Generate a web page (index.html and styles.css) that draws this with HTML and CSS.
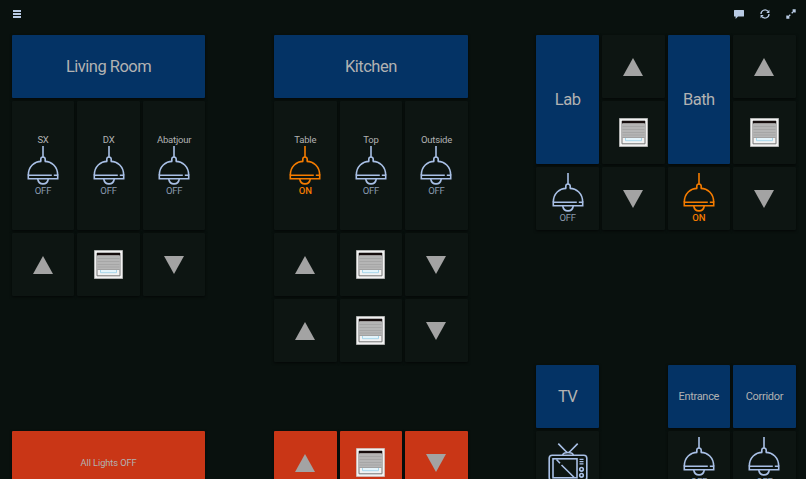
FILE: index.html
```html
<!DOCTYPE html>
<html lang="en">
<head>
<meta charset="utf-8">
<title>Home dashboard</title>
<link rel="stylesheet" href="styles.css">
</head>
<body>
<svg class="defs" aria-hidden="true">
  <symbol id="lamp" viewBox="0 0 32 39">
    <g fill="none" stroke="currentColor" stroke-width="1.6">
      <path d="M16 0V11.5"/>
      <path d="M13.800 15.500V13.200a2.200 2.200 0 0 1 4.400 0v2.300"/>
      <path d="M1.300 29.200C1.300 20.500 7.500 15.400 14.300 15.400M17.700 15.400C24.500 15.400 30.700 20.500 30.700 29.200"/>
      <path d="M1.300 28.500V32.700H30.700V28.500M1.300 29.300H24.800M26.800 29.300H30.700"/>
      <path d="M10.700 33C11.300 36.300 13.500 37.900 16 37.900S20.700 36.300 21.300 33"/>
    </g>
  </symbol>
  <symbol id="blind" viewBox="0 0 29 29">
    <path fill="#f1f1f1" stroke="#b5b5b5" stroke-width=".5" d="M.3 .3H28.700V28.700H.3Z"/>
    <path fill="#f2f2f2" stroke="#777" d="M3 3H26V25.800H3Z"/>
    <path fill="#150c0c" d="M3 3H26V5.500H3Z"/>
    <path fill="#b5b5b5" d="M3.500 5.500H25.500V19.500H3.500Z"/>
    <path stroke="#9c9c9c" stroke-width=".6" d="M3.500 8.500H25.500M3.500 11.500H25.500M3.500 14.500H25.500M3.500 17H25.500"/>
    <path stroke="#8b8b8b" stroke-width=".7" d="M3.500 19.500H25.500"/>
    <path fill="#e4f4fb" stroke="#a5d5ea" d="M6.500 20V22.700H22.500V20"/>
  </symbol>
  <symbol id="up" viewBox="0 0 20 18"><path fill="#a3a3a3" d="M10 0L20 18H0Z"/></symbol>
  <symbol id="down" viewBox="0 0 20 18"><path fill="#a3a3a3" d="M0 0H20L10 18Z"/></symbol>
  <symbol id="tv" viewBox="0 0 40 39">
    <g fill="none" stroke="currentColor" stroke-width="1.600">
      <path d="M10.300 .6L19 9.500M29.700 .6L21 9.500M14.700 12C15.300 9.800 17 9.500 20 9.500S24.700 9.800 25.300 12"/>
      <rect x="1.200" y="12.300" width="37.600" height="25" rx="3"/>
      <rect x="5" y="15.800" width="24" height="19"/>
      <path d="M8.500 16.500L12 20.200M13.500 22L26 34.200"/>
      <path d="M31.500 16.300H35.500M31.500 18.600H35.500M31.500 20.900H35.500" stroke-width="1.200"/>
      <circle cx="33.500" cy="26.300" r="1.800"/><circle cx="33.500" cy="32.300" r="1.800"/>
    </g>
  </symbol>
</svg>

<header class="topbar">
  <svg class="menu" viewBox="0 0 8 8"><path fill="currentColor" d="M0 0H8V1.900H0ZM0 3.050H8V4.950H0ZM0 6.100H8V8H0Z"/></svg>
  <div class="tools">
    <svg class="chat" viewBox="0 0 10 9"><path fill="currentColor" d="M.6 0H9.400Q10 0 10 .6V6Q10 6.600 9.400 6.600H4L1.600 9V6.600H.6Q0 6.600 0 6V.6Q0 0 .6 0Z"/></svg>
    <svg class="sync" viewBox="0 0 10 10"><path fill="none" stroke="currentColor" stroke-width="1.300" d="M1 5A4 4 0 0 1 7.900 2.200M9 5A4 4 0 0 1 2.100 7.800"/><path fill="currentColor" d="M9.400 .8V3.900H6.300ZM.6 9.200V6.100H3.700Z"/></svg>
    <svg class="expand" viewBox="0 0 10 10"><path stroke="currentColor" stroke-width="1.300" d="M1.500 8.500L4.300 5.700M5.700 4.300L8.500 1.500"/><path fill="currentColor" d="M6.600 .3H9.700V3.400H8.300L6.600 1.700ZM.3 6.600V9.700H3.400V8.300L1.700 6.600Z"/></svg>
  </div>
</header>

<main class="board">
  <div class="tile title c1 r1 wide">Living Room</div>
  <div class="tile light c1 r2 tall"><span class="name">SX</span><svg><use href="#lamp"/></svg><span class="state">OFF</span></div>
  <div class="tile light c2 r2 tall"><span class="name">DX</span><svg><use href="#lamp"/></svg><span class="state">OFF</span></div>
  <div class="tile light c3 r2 tall"><span class="name">Abatjour</span><svg><use href="#lamp"/></svg><span class="state">OFF</span></div>
  <div class="tile c1 r4"><svg class="arrow"><use href="#up"/></svg></div>
  <div class="tile c2 r4"><svg class="blind"><use href="#blind"/></svg></div>
  <div class="tile c3 r4"><svg class="arrow"><use href="#down"/></svg></div>
  <div class="tile alert c1 r7 wide">All Lights OFF</div>

  <div class="tile title c5 r1 wide">Kitchen</div>
  <div class="tile light on c5 r2 tall"><span class="name">Table</span><svg><use href="#lamp"/></svg><span class="state">ON</span></div>
  <div class="tile light c6 r2 tall"><span class="name">Top</span><svg><use href="#lamp"/></svg><span class="state">OFF</span></div>
  <div class="tile light c7 r2 tall"><span class="name">Outside</span><svg><use href="#lamp"/></svg><span class="state">OFF</span></div>
  <div class="tile c5 r4"><svg class="arrow"><use href="#up"/></svg></div>
  <div class="tile c6 r4"><svg class="blind"><use href="#blind"/></svg></div>
  <div class="tile c7 r4"><svg class="arrow"><use href="#down"/></svg></div>
  <div class="tile c5 r5"><svg class="arrow"><use href="#up"/></svg></div>
  <div class="tile c6 r5"><svg class="blind"><use href="#blind"/></svg></div>
  <div class="tile c7 r5"><svg class="arrow"><use href="#down"/></svg></div>
  <div class="tile alert c5 r7"><svg class="arrow"><use href="#up"/></svg></div>
  <div class="tile alert c6 r7"><svg class="blind"><use href="#blind"/></svg></div>
  <div class="tile alert c7 r7"><svg class="arrow"><use href="#down"/></svg></div>

  <div class="tile title c9 r1 tall">Lab</div>
  <div class="tile c10 r1"><svg class="arrow"><use href="#up"/></svg></div>
  <div class="tile c10 r2"><svg class="blind"><use href="#blind"/></svg></div>
  <div class="tile light c9 r3"><svg><use href="#lamp"/></svg><span class="state">OFF</span></div>
  <div class="tile c10 r3"><svg class="arrow"><use href="#down"/></svg></div>
  <div class="tile title c11 r1 tall">Bath</div>
  <div class="tile c12 r1"><svg class="arrow"><use href="#up"/></svg></div>
  <div class="tile c12 r2"><svg class="blind"><use href="#blind"/></svg></div>
  <div class="tile light on c11 r3"><svg><use href="#lamp"/></svg><span class="state">ON</span></div>
  <div class="tile c12 r3"><svg class="arrow"><use href="#down"/></svg></div>

  <div class="tile title c9 r6">TV</div>
  <div class="tile title small c11 r6">Entrance</div>
  <div class="tile title small c12 r6">Corridor</div>
  <div class="tile c9 r7"><svg class="tv"><use href="#tv"/></svg></div>
  <div class="tile light c11 r7"><svg><use href="#lamp"/></svg><span class="state">OFF</span></div>
  <div class="tile light c12 r7"><svg><use href="#lamp"/></svg><span class="state">OFF</span></div>
</main>
</body>
</html>
```
FILE: styles.css
```css
* { box-sizing: border-box; }

body {
  margin: 0;
  height: 100vh;
  overflow: hidden;
  background: #09110e;
  color: #b2b2b2;
  font-family: Roboto, "Liberation Sans", sans-serif;
}

.defs { display: none; }
svg { display: block; flex: none; }

.topbar {
  height: 35px;
  padding: 0 10px 7px 13px;
  display: flex;
  align-items: center;
  justify-content: space-between;
  color: #b9cbe4;
}
.tools { display: flex; align-items: center; gap: 16px; }
.menu { width: 8px; height: 8px; }
.chat { width: 10px; height: 9px; }
.sync { width: 10px; height: 10px; }
.expand { width: 10px; height: 10px; }

.board {
  display: grid;
  width: 784px;
  margin-left: 11.7px;
  grid-template-columns: repeat(12, 1fr);
  grid-auto-rows: 62.600px;
  gap: 3.400px 3px;
}

.tile {
  display: flex;
  flex-direction: column;
  align-items: center;
  justify-content: center;
  background: #0d1512;
  border-radius: 1px;
  box-shadow: 0 1px 3px rgba(0, 0, 0, .65);
}
.title { background: #043365; font-size: 16.500px; letter-spacing: -.5px; }
.small { font-size: 11px; letter-spacing: -.3px; }
.alert { background: #c93616; font-size: 9.300px; letter-spacing: -.1px; }

.wide { grid-column-end: span 3; }
.tall { grid-row-end: span 2; }
.c1 { grid-column-start: 1; }
.c2 { grid-column-start: 2; }
.c3 { grid-column-start: 3; }
.c5 { grid-column-start: 5; }
.c6 { grid-column-start: 6; }
.c7 { grid-column-start: 7; }
.c9 { grid-column-start: 9; }
.c10 { grid-column-start: 10; }
.c11 { grid-column-start: 11; }
.c12 { grid-column-start: 12; }
.r1 { grid-row-start: 1; }
.r2 { grid-row-start: 2; }
.r3 { grid-row-start: 3; }
.r4 { grid-row-start: 4; }
.r5 { grid-row-start: 5; }
.r6 { grid-row-start: 6; }
.r7 { grid-row-start: 7; }

.light { color: #a9c0e6; font-size: 9.500px; line-height: 12px; letter-spacing: -.2px; }
.light svg { width: 32px; height: 39px; }
.name { color: #b2b2b2; }
.state { color: #8b9bb0; }
.on, .on .state { color: #f57c00; }
.on .name { color: #b2b2b2; }
.on .state { font-weight: 500; }

.arrow { width: 20px; height: 18px; margin-top: 1px; }
.blind { width: 29px; height: 29px; }
.tv { width: 40px; height: 39px; color: #a9c0e6; }
```
